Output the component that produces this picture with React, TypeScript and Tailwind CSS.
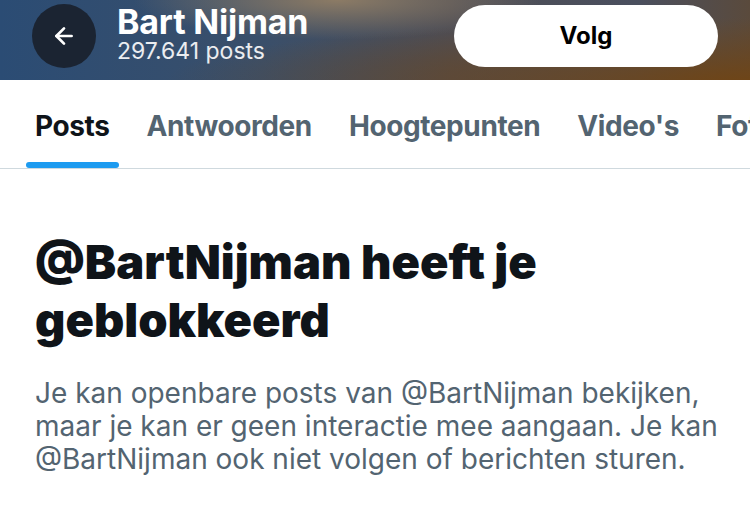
import React from "react";
import { ArrowLeft } from "lucide-react";

export default function App() {
  const tabs = ["Posts", "Antwoorden", "Hoogtepunten", "Video's", "Foto's"];

  return (
    <div className="w-[750px] h-[514px] overflow-hidden bg-white font-['Inter','Liberation_Sans',sans-serif]">
      {/* Blurred banner header */}
      <div className="h-[80px] flex items-center pl-[32px] pr-[32px] bg-[radial-gradient(ellipse_at_45%_0%,#8c7b65_0%,transparent_35%),radial-gradient(ellipse_at_100%_100%,#6e4518_0%,transparent_55%),linear-gradient(90deg,#2b4c74_0%,#3a4f6a_35%,#4d4d55_60%,#4a4f5e_85%,#5a4a3c_100%)]">
        <button className="w-[64px] h-[64px] rounded-full bg-[#1b2432] flex items-center justify-center shrink-0 -mt-[8px]">
          <ArrowLeft className="w-[26px] h-[26px] text-white" strokeWidth={2.5} />
        </button>
        <div className="ml-[21px] flex flex-col -mt-[10px]">
          <span className="text-white text-[34px] font-bold leading-[32px] tracking-[-0.2px]">Bart Nijman</span>
          <span className="text-white/90 text-[23px] leading-[26px]">297.641 posts</span>
        </div>
        <div className="ml-auto -mt-[8px] w-[264px] h-[62px] rounded-full bg-white flex items-center justify-center">
          <span className="text-black text-[24px] font-bold">Volg</span>
        </div>
      </div>

      {/* Tabs */}
      <div className="h-[89px] border-b border-[#cfd9de] flex pl-[26px] overflow-hidden whitespace-nowrap">
        {tabs.map((t, i) => (
          <div key={t} className="relative flex items-center px-[9px] mr-[19px] shrink-0">
            <span
              className={`text-[28px] font-bold tracking-[-0.4px] mt-[4px] ${
                i === 0 ? "text-[#0f1419]" : "text-[#536471]"
              }`}
            >
              {t}
            </span>
            {i === 0 && (
              <div className="absolute left-0 right-0 bottom-0 h-[6px] rounded-full bg-[#1d9bf0]" />
            )}
          </div>
        ))}
      </div>

      {/* Blocked message */}
      <div className="pl-[35px] pt-[64px]">
        <h1 className="text-[47px] font-black leading-[58px] text-[#0f1419] whitespace-nowrap">
          @BartNijman heeft je
          <br />
          geblokkeerd
        </h1>
        <p className="mt-[28px] text-[28px] leading-[33px] text-[#536471] whitespace-nowrap">
          Je kan openbare posts van @BartNijman bekijken,
          <br />
          maar je kan er geen interactie mee aangaan. Je kan
          <br />
          @BartNijman ook niet volgen of berichten sturen.
        </p>
      </div>
    </div>
  );
}
